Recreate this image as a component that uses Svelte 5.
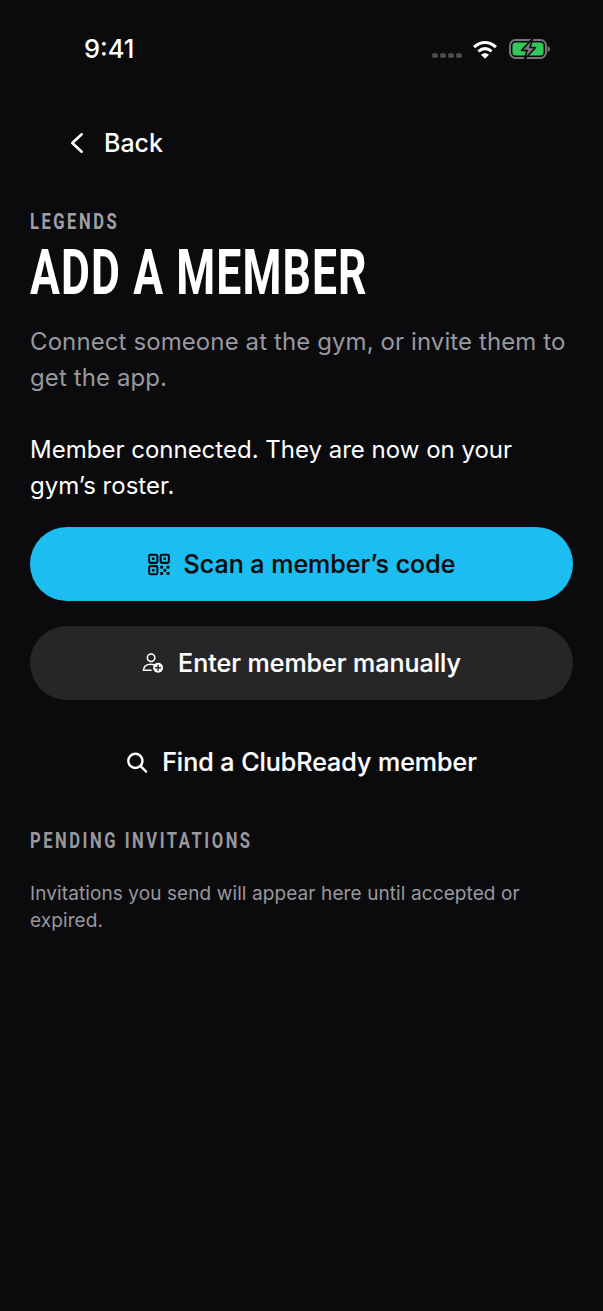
<script>
  const actions = [
    { label: "Scan a member’s code", icon: "qr", kind: "primary" },
    { label: "Enter member manually", icon: "person", kind: "secondary" },
    { label: "Find a ClubReady member", icon: "search", kind: "plain" }
  ];
</script>

<div class="screen">
  <header class="status">
    <span class="time">9:41</span>
    <div class="status-icons">
      <span class="dots"><i></i><i></i><i></i><i></i></span>
      <svg width="26" height="19" viewBox="0 0 26 19" fill="none" stroke="#fff" stroke-width="3">
        <path d="M2 7.200C9 1 17 1 24 7.200" />
        <path d="M6.400 11.400C10.600 7.800 15.400 7.800 19.600 11.400" />
        <path d="M13 18.800L9 14.800C11.400 12.800 14.600 12.800 17 14.800Z" fill="#fff" stroke="none" />
      </svg>
      <svg width="42" height="22" viewBox="0 0 42 22">
        <rect x="1" y="2" width="36" height="18" rx="5.500" fill="none" stroke="#77777a" stroke-width="1.900" />
        <rect x="3.500" y="4.500" width="31" height="13" rx="3.200" fill="#34c759" />
        <path d="M38.600 8v6c1.600-.5 2.400-1.600 2.400-3s-.8-2.500-2.400-3z" fill="#77777a" />
        <path d="M23.500 .5L12.500 12.500H18L15.500 21.500L26.500 9.500H21Z" fill="#77777a" stroke="#0b0b0d" stroke-width="1.600" stroke-linejoin="round" />
      </svg>
    </div>
  </header>

  <nav class="back">
    <svg width="16" height="24" viewBox="0 0 16 24" fill="none" stroke="#fff" stroke-width="2.600" stroke-linejoin="round" stroke-linecap="round">
      <path d="M12.700 3.300L3.300 12l9.400 8.700" />
    </svg>
    <span>Back</span>
  </nav>

  <main>
    <p class="eyebrow">LEGENDS</p>
    <h1>ADD A MEMBER</h1>
    <p class="lead">Connect someone at the gym, or invite them to get the app.</p>
    <p class="notice">Member connected. They are now on your gym’s roster.</p>

    <div class="actions">
      {#each actions as action}
        <button class={action.kind}>
          {#if action.icon === "qr"}
            <svg width="22" height="23" viewBox="0 0 23 23" fill="none" stroke="#0b0b0d" stroke-width="2.100">
              <rect x="1.200" y="1.200" width="8.600" height="8.600" rx="1.500" />
              <rect x="13.200" y="1.200" width="8.600" height="8.600" rx="1.500" />
              <rect x="1.200" y="13.200" width="8.600" height="8.600" rx="1.500" />
              <g fill="#0b0b0d" stroke="none">
                <rect x="4.200" y="4.200" width="2.600" height="2.600" />
                <rect x="16.200" y="4.200" width="2.600" height="2.600" />
                <rect x="4.200" y="16.200" width="2.600" height="2.600" />
                <rect x="12.800" y="12.800" width="3" height="3" />
                <rect x="19.400" y="12.800" width="3" height="3" />
                <rect x="16.100" y="16.100" width="3" height="3" />
                <rect x="12.800" y="19.400" width="3" height="3" />
                <rect x="19.400" y="19.400" width="3" height="3" />
              </g>
            </svg>
          {:else if action.icon === "person"}
            <svg width="22" height="22" viewBox="0 0 23 22" fill="none" stroke="#fff" stroke-width="1.600" stroke-linecap="round">
              <circle cx="9.500" cy="5.500" r="3.900" />
              <path d="M1.500 18.500c.2-3.800 3.400-6.200 8-6.200 1.200 0 2.300.2 3.200.5" />
              <path d="M1.500 18.500h8" />
              <circle cx="16.800" cy="16" r="5.200" fill="#fff" stroke="none" />
              <path d="M16.800 13.400v5.200M14.200 16h5.200" stroke="#262629" stroke-width="1.500" />
            </svg>
          {:else}
            <svg width="22" height="23" viewBox="0 0 23 23" fill="none" stroke="#fff" stroke-width="2.500" stroke-linecap="round">
              <circle cx="9.800" cy="9.800" r="7.400" />
              <path d="M15.400 15.400L21 21" />
            </svg>
          {/if}
          <span>{action.label}</span>
        </button>
      {/each}
    </div>

    <h2>PENDING INVITATIONS</h2>
    <p class="hint">Invitations you send will appear here until accepted or expired.</p>
  </main>
</div>

<style>
  :global(body) {
    margin: 0;
    background: #0b0b0d;
  }

  .screen {
    min-height: 1311px;
    background: #0b0b0d;
    color: #fff;
    font-family: Inter, "Noto Sans", sans-serif;
  }

  .status {
    height: 98px;
    box-sizing: border-box;
    padding: 33px 52px 0 84px;
    display: flex;
    justify-content: space-between;
    align-items: flex-start;
  }

  .time {
    font-size: 25.500px;
    line-height: 32px;
    font-weight: 500;
  }

  .status-icons {
    display: flex;
    align-items: center;
    gap: 11px;
    padding-top: 5px;
  }

  .dots {
    display: flex;
    gap: 2px;
    margin-top: 12px;
    margin-right: -1px;
  }

  .dots i {
    width: 6px;
    height: 5px;
    border-radius: 2px;
    background: #4a4a4c;
  }

  .back {
    display: flex;
    align-items: center;
    gap: 19px;
    padding-left: 69px;
    height: 90px;
    font-size: 25px;
    font-weight: 500;
  }

  main {
    padding: 0 30px;
  }

  /* Oswald isn't installed, so the headings squeeze Roboto to its width */
  .eyebrow,
  h1,
  h2 {
    font-family: Roboto, sans-serif;
    transform-origin: left center;
  }

  .eyebrow {
    margin: 19px 0 0;
    font-size: 21px;
    line-height: 30px;
    letter-spacing: 3.200px;
    color: #a0a0a8;
    font-weight: 700;
    transform: scale(0.788, 1.06);
  }

  h1 {
    margin: 0;
    font-size: 60px;
    line-height: 72px;
    font-weight: 700;
    letter-spacing: 1.500px;
    transform: scale(0.741, 1.06);
  }

  .lead {
    margin: 15px 0 0;
    font-size: 24px;
    line-height: 36px;
    letter-spacing: 0.100px;
    color: #98989e;
  }

  .notice {
    margin: 36px 0 0;
    font-size: 24px;
    line-height: 36px;
  }

  .actions {
    display: flex;
    flex-direction: column;
    gap: 25px;
    margin-top: 23px;
  }

  button {
    height: 74px;
    border: none;
    border-radius: 37px;
    display: flex;
    align-items: center;
    justify-content: center;
    gap: 14px;
    font-family: inherit;
    font-size: 25px;
    font-weight: 500;
    -webkit-text-stroke: 0.2px currentColor;
    padding: 0;
  }

  .primary {
    background: #1cbdf0;
    color: #0b0b0d;
  }

  .secondary {
    background: #262629;
    color: #fff;
  }

  .plain {
    background: transparent;
    color: #fff;
  }

  h2 {
    margin: 27px 0 0;
    font-size: 21px;
    line-height: 30px;
    font-weight: 700;
    letter-spacing: 3.200px;
    color: #98989e;
    transform: scale(0.79, 1.06);
  }

  .hint {
    margin: 24px 0 0;
    font-size: 19px;
    line-height: 27px;
    letter-spacing: 0.100px;
    color: #98989e;
  }
</style>
